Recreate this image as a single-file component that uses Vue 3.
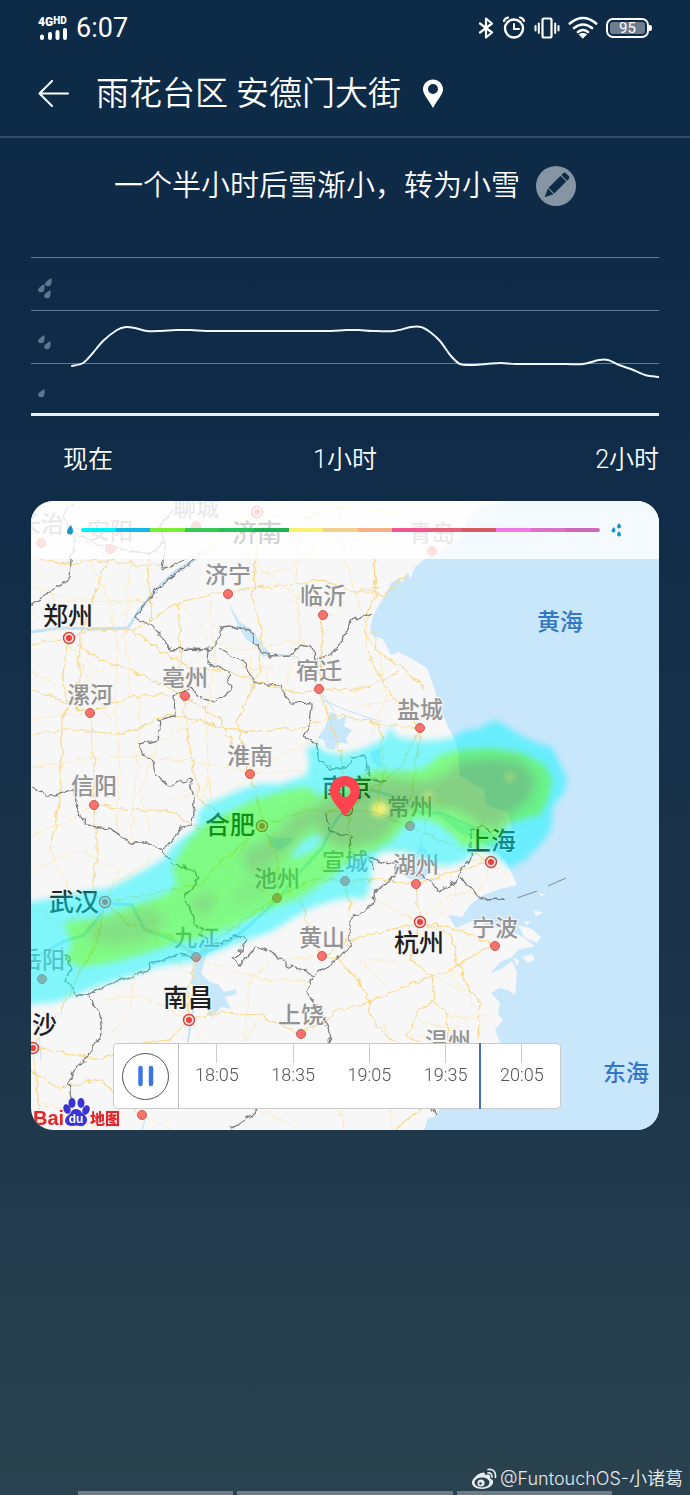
<template>
  <div class="page">
    <!-- 状态栏 -->
    <div class="status-bar">
      <div class="status-left">
        <div class="signal">
          <span class="network">4G<sup>HD</sup></span>
          <svg width="30" height="12" viewBox="0 0 30 12">
            <path d="M4 8.500v1.500M12 6v4M19.500 4v6M27 2v8" stroke="#fff" stroke-width="4" stroke-linecap="round" />
          </svg>
        </div>
        <span class="clock">6:07</span>
      </div>
      <div class="status-right">
        <svg width="16" height="24" viewBox="0 0 16 24">
          <path d="M2 7.500l12 9-6 5V2.500l6 5-12 9" fill="none" stroke="#fff" stroke-width="2.200" stroke-linejoin="round" stroke-linecap="round" />
        </svg>
        <svg width="24" height="24" viewBox="0 0 24 24" fill="none" stroke="#fff" stroke-linecap="round">
          <circle cx="12" cy="12.500" r="9" stroke-width="2.400" />
          <path d="M12 8v5h5" stroke-width="2" />
          <path d="M2 5q1-3 4-3.500M22 5q-1-3-4-3.500" stroke-width="2.200" />
        </svg>
        <svg width="26" height="24" viewBox="0 0 26 24" fill="none" stroke="#fff" stroke-linecap="round">
          <rect x="8.500" y="2.500" width="9" height="19" rx="1.500" stroke-width="2.200" />
          <path d="M4.800 7.500v9.500M21.200 7.500v9.500M1.500 10v4.500M24.500 10v4.500" stroke-width="2" />
        </svg>
        <svg width="30" height="24" viewBox="0 0 30 24" fill="none" stroke="#fff" stroke-width="2.600" stroke-linecap="round">
          <path d="M1.800 7.500q13.200-11 26.400 0M6 12q9-7 18 0M10 16q5-4 10 0" />
          <path d="M11.500 18.300q3.500-2 7 0L15 22z" fill="#fff" stroke-width="1" />
        </svg>
        <div class="battery"><span class="battery-level">95</span></div>
      </div>
    </div>

    <!-- 标题 -->
    <header class="header">
      <button class="icon-btn back" type="button" aria-label="返回">
        <svg width="32" height="28" viewBox="0 0 32 28" fill="none" stroke="#fff" stroke-width="2" stroke-linecap="round" stroke-linejoin="round">
          <path d="M14 1L1.500 13.500 14 26M1.500 13.500H30" />
        </svg>
      </button>
      <h1 class="title">雨花台区 安德门大街</h1>
      <svg class="location" width="20" height="30" viewBox="0 0 20 30">
        <path d="M10 .5C4.500.5 0 4.800 0 10.200 0 15.500 5.500 20.500 10 29c4.500-8.500 10-13.500 10-18.800C20 4.800 15.500.5 10 .5zm0 4.500a5 5 0 1 1 0 10 5 5 0 0 1 0-10z" fill="#fff" />
      </svg>
    </header>

    <div class="forecast">
      <p class="forecast-text">一个半小时后雪渐小，转为小雪</p>
      <button class="icon-btn edit" type="button" aria-label="编辑">
        <svg width="40" height="40" viewBox="0 0 40 40">
          <circle cx="20" cy="20" r="20" fill="#8695a4" />
          <g transform="rotate(45 20 20)" fill="#0e2b48">
            <path d="M16 6q0-2 2-2h4q2 0 2 2v2.500h-8zM16 9.500h8v17h-8zM16 27.500h8L20 36z" />
          </g>
        </svg>
      </button>
    </div>

    <!-- 降水曲线 -->
    <section class="chart">
      <svg class="chart-svg" viewBox="0 0 628 160">
        <path d="M0 .5H628M0 53.500H628M0 106.500H628" stroke="#617a92" stroke-width="1" />
        <path d="M0 157.500H628" stroke="#e9f0fa" stroke-width="3" />
        <path v-for="(d, i) in chartDrops" :key="i" :transform="`translate(${d[0]} ${d[1]})`" d="M6.500 0Q7 4 6 6.500A3.200 3.200 0 0 1 0 6Q0 3.500 6.500 0z" fill="#5f778d" />
        <path :d="curve" fill="none" stroke="#f2f7ff" stroke-width="2" stroke-linecap="round" />
      </svg>
      <div class="axis">
        <span class="axis-now">现在</span>
        <span>1小时</span>
        <span class="axis-end">2小时</span>
      </div>
    </section>

    <!-- 雷达地图 -->
    <section class="map">
      <svg class="map-svg" viewBox="31 501 628 629">
        <defs>
          <filter id="soft" x="-10%" y="-10%" width="120%" height="120%" color-interpolation-filters="sRGB"><feGaussianBlur stdDeviation="3" /></filter>
          <filter id="softer" x="-30%" y="-30%" width="160%" height="160%" color-interpolation-filters="sRGB"><feGaussianBlur stdDeviation="6" /></filter>
          <filter id="rough" x="-5%" y="-5%" width="110%" height="110%" color-interpolation-filters="sRGB">
            <feTurbulence type="fractalNoise" baseFrequency="0.12" numOctaves="2" seed="4" />
            <feDisplacementMap in="SourceGraphic" scale="8" xChannelSelector="R" yChannelSelector="G" />
          </filter>
        </defs>
        <rect x="31" y="501" width="628" height="629" fill="#f7f7f7" />

        <g fill="#c9e7fb">
          <path d="M505 501L480 508 467 520 462 533 450 545 440 552 426 558 415 567 410 580 408 572 402 582 398 579 391 583 387 592 380 603 373 616 370 628 372 636 383 639 391 655 398 652 412 659 427 668 433 685 441 710 448 727 455 740 458 752 460 776 484 790 487 806 508 812 512 828 500 836 480 830 460 824 442 812 434 809 446 822 462 834 482 842 495 850 505 861 512 874 517 885 500 889 483 895 470 905 462 917 448 915 456 928 475 920 488 926 510 930 524 938 535 946 518 950 512 957 500 962 490 974 503 968 512 961 517 972 515 995 508 990 500 988 491 993 500 1003 498 1014 503 1020 495 1030 500 1042 496 1050 499 1065 480 1095 440 1108 434 1117 428 1118 424 1130H659V501z" />
          <path d="M228 602L234 612 240 622 252 630 262 644 270 653 263 658 259 648 247 640 238 626z" />
          <path d="M330 712l6 2 2 6 8-4-2 10 8 4-6 8 2 6-10-2-4 8-8-2-2-8-7-2 8-10z" />
          <path d="M195 965l8-22 6 3-4 14-4 14 9 8 8 2 6 8 12-3 1 5-12 3 6 12-10-2-8 10-6-2 4-16-8-10-12-5z" />
          <path d="M401 862l12-3 8-14 6 6 2 20-6 9-14-1-12-8z" />
          <path d="M266 834l12 4 16 0-8 9-8 4-8-8z" />
          <path d="M370 752l10-4 1 20-8-6z" />
        </g>
        <g fill="none" stroke="#c3e2f6" stroke-width="3" stroke-linejoin="round">
          <path d="M31 632L60 628 92 629 128 628 138 612 155 590 176 571 197 558 202 549" />
          <path d="M31 960L48 950 62 942 84 935 98 918 106 903 132 905 145 930 168 938 198 955 226 944 250 925 277 900 300 872 322 848 335 822 346 808 372 790 398 798 418 812 444 814 475 828" />
          <path d="M188 1042L191 1020 198 985" stroke-width="2" />
          <path d="M31 1020l8 10 2 30M142 1130l4-14" stroke-width="1" />
          <path d="M270 653l28 4 24 36 12 18M322 700l24 10 35 12" stroke-width="1" />
        </g>
        <g fill="#f7f7f7">
          <path d="M518 925l14 4 9 8-4 6-12-5zM522 957l10-3 3 5-7 4zM533 910l10 3-7 3zM540 893l6 2-6 1zM513 958l6 2-2 6zM524 921l7 1-5 3zM476 840l14 8 5 5-8-2z" />
        </g>

        <!-- 道路 -->
        <g fill="none" stroke-linejoin="round" filter="url(#rough)">
          <path v-for="(d, i) in minorRoads" :key="'n' + i" :d="d" stroke="#fbebc3" />
          <path v-for="(d, i) in majorRoads" :key="'m' + i" :d="d" stroke="#f6d988" stroke-width="1.200" />
        </g>

        <!-- 省界 -->
        <g filter="url(#rough)" fill="none" stroke="#7c7c7c" stroke-width="1.300">
          <path v-for="(d, i) in borders" :key="i" :d="d" />
        </g>
        <path d="M517 898L537 891M548 886L566 878" stroke="#7f8b93" stroke-width="1" />

        <!-- 城市 -->
        <g v-for="(c, i) in cities" :key="i">
          <template v-if="c.capital">
            <circle :cx="c.dot[0]" :cy="c.dot[1]" r="5.500" fill="#fbdedb" stroke="#cf4040" stroke-width="1.400" />
            <circle :cx="c.dot[0]" :cy="c.dot[1]" r="3" fill="#ec4038" />
          </template>
          <circle v-else :cx="c.dot[0]" :cy="c.dot[1]" r="4.500" fill="#fb716b" stroke="#c65a57" />
          <text :class="['city', { capital: c.capital }]" :x="c.label[0]" :y="c.label[1] + 9">{{ c.name }}</text>
        </g>
        <text class="sea" x="560" y="630">黄海</text>
        <text class="sea" x="626" y="1081">东海</text>

        <!-- 雷达回波 -->
        <g opacity="0.5">
          <path filter="url(#soft)" fill="#08f4ff" d="M20 904L60 897 95 890 110 888 130 878 150 867 165 858 172 846 185 836 197 828 198 812 208 803 222 798 240 790 258 784 280 784 292 780 306 776 310 762 306 750 315 744 325 752 340 755 360 750 372 745 385 738 390 726 396 737 420 741 440 740 455 737 462 731 480 728 495 720 510 728 520 735 535 742 552 747 558 760 567 778 564 793 553 806 551 830 540 845 525 860 510 868 498 858 480 848 462 862 442 866 420 855 400 851 380 852 372 862 370 885 366 898 350 898 335 900 310 908 290 920 270 932 240 942 215 952 190 962 160 966 130 976 100 985 80 993 55 1002 20 1005z" />
          <path filter="url(#soft)" fill="#08ff14" d="M64 922L100 918 125 908 145 902 165 895 177 885 172 868 182 850 190 838 207 823 233 810 253 800 287 790 307 787 320 797 340 788 360 778 375 770 400 772 425 768 440 755 460 750 490 748 520 752 545 765 552 780 548 800 540 815 520 820 505 824 498 840 482 848 462 846 450 832 432 820 415 818 402 828 390 842 370 852 350 858 340 870 320 885 300 898 280 905 255 915 230 928 200 938 170 945 140 955 110 963 80 967 65 960 72 945z" />
          <path filter="url(#soft)" fill="#08f4ff" d="M290 856l10-14 20-10 6 4-10 12-18 10z" />
          <g filter="url(#softer)" fill="#14a010">
            <path d="M322 800L345 792 365 780 395 778 425 782 450 772 458 762 490 758 522 762 536 780 530 800 512 812 500 828 480 826 462 812 440 808 415 806 398 820 384 838 362 846 340 848 322 838 314 815z" opacity="0.9" />
            <path d="M240 852l30-14 24-24 14-2 2 12-14 18-20 20-28 14z" opacity="0.7" />
            <path d="M290 822l20-18 14 4-4 14-14 10z" opacity="0.6" />
            <path d="M188 900l20-10 10 14-18 14z" opacity="0.6" />
            <path d="M85 925l40-10 26-8 16 10-16 22-40 8-20-6z" opacity="0.55" />
            <path d="M230 890l40-20 20 4-24 22-30 12z" opacity="0.3" />
          </g>
          <g filter="url(#soft)" fill="#f4f000">
            <ellipse cx="380" cy="809" rx="9" ry="7" />
            <ellipse cx="428" cy="796" rx="5" ry="4" opacity="0.6" />
            <ellipse cx="510" cy="777" rx="5" ry="4" opacity="0.5" />
          </g>
        </g>

        <!-- 当前位置 -->
        <path d="M345 776c-8.500 0-15 6.600-15 15 0 10 8 15 13.500 23.500q1.500 2 3 0C352 806 360 801 360 791c0-8.400-6.500-15-15-15zm0 10a5.500 5.500 0 1 1 0 11 5.500 5.500 0 0 1 0-11z" fill="#ff4450" />

        <!-- 百度地图标志 -->
        <g>
          <text class="logo-text" x="33" y="1125">Bai</text>
          <g fill="#3b33d3">
            <ellipse cx="67" cy="1109" rx="3.500" ry="5" transform="rotate(-20 67 1109)" />
            <ellipse cx="72" cy="1103" rx="3.500" ry="5" />
            <ellipse cx="81" cy="1103" rx="3.500" ry="5" />
            <ellipse cx="86" cy="1110" rx="3.500" ry="5" transform="rotate(25 86 1110)" />
            <path d="M76 1109q4 0 6 4 6 4 5 8-2 6-7 5-4-1-8 0-6 0-7-5 0-4 5-7 2-5 6-5z" />
          </g>
          <text class="logo-du" x="76" y="1123">du</text>
          <text class="logo-map" x="90" y="1124">地图</text>
        </g>
      </svg>

      <div class="legend">
        <svg width="8" height="10" viewBox="0 0 8 10"><path d="M5 0Q7 4 7 6.500A3 3 0 0 1 1 6.500Q1 4 5 0z" fill="#1c94d0" /></svg>
        <div class="legend-bar">
          <span v-for="color in levels" :key="color" :style="{ background: color }"></span>
        </div>
        <svg width="12" height="14" viewBox="0 0 12 14" fill="#1c94d0">
          <path d="M3 4q1.500 2 1.500 3.500a2 2 0 0 1-4 0Q.5 6 3 4zM8 0q2 2 2 3.500a2 2 0 0 1-4 0Q6 2 8 0zM8 8q2 2 2 3.500a2 2 0 0 1-4 0Q6 10 8 8z" />
        </svg>
      </div>

      <div class="player">
        <div class="player-control">
          <button class="play-btn" type="button" :aria-label="playing ? '暂停' : '播放'" @click="playing = !playing">
            <svg width="18" height="22" viewBox="0 0 18 22">
              <path v-if="playing" d="M3.500 3v16M14 3v16" stroke="#3e74e8" stroke-width="4.500" stroke-linecap="round" />
              <path v-else d="M4 2l12 9-12 9z" fill="#3e74e8" />
            </svg>
          </button>
        </div>
        <div class="timeline">
          <span v-for="t in times" :key="t" class="time">{{ t }}</span>
          <i class="cursor" :style="{ left: progress + '%' }"></i>
        </div>
      </div>
    </section>

    <footer class="footer">
      <div class="author">
        <svg width="26" height="22" viewBox="0 0 26 22">
          <path d="M10 5Q4 7 1 13.500C0 18 5 21 11 21c7 0 12-4 11-8-.5-2-3-2-3-3 1-3-1-4.500-5-3 0-3-1-3-4-2z" fill="#e8edf0" />
          <ellipse cx="11" cy="14.500" rx="7.500" ry="5" fill="#2a404d" />
          <circle cx="10" cy="15" r="3.600" fill="#e8edf0" />
          <circle cx="9.500" cy="15.500" r="1.300" fill="#2a404d" />
          <path d="M17 5q4-.5 4 4M17 1.500q8-1 7.500 8" fill="none" stroke="#e8edf0" stroke-width="1.700" stroke-linecap="round" />
        </svg>
        <span>@FuntouchOS-小诸葛</span>
      </div>
      <div class="nav-hints">
        <i class="hint"></i>
        <i class="hint wide"></i>
        <i class="hint"></i>
      </div>
    </footer>
  </div>
</template>

<script setup>
import { ref, computed } from 'vue';

const playing = ref(true);
const progress = ref(79);

const times = ['18:05', '18:35', '19:05', '19:35', '20:05'];

const levels = [
  '#00f0f6', '#12b9e6', '#77ef35', '#36c855', '#25c25b', '#1cb054', '#f9f070', '#f0d08c',
  '#f6b184', '#ef5791', '#e26378', '#d75a66', '#f078e8', '#da70ca', '#cb68b8'
];

// 雨滴图标位置
const chartDrops = [
  [14, 21], [7, 27], [13, 33],
  [7, 78], [13, 84],
  [7, 132]
];

// 降水强度
const rain = [
  [41, 109], [52, 106], [61, 97], [72, 84], [86, 73], [95, 70], [104, 71], [116, 74], [130, 74],
  [145, 73], [160, 73], [175, 74], [195, 74], [220, 74], [250, 74], [280, 74], [300, 74],
  [315, 73], [328, 73], [342, 74], [363, 74], [380, 70], [390, 70],
  [399, 75], [409, 84], [420, 99], [429, 107], [440, 108], [455, 107], [470, 106], [485, 107],
  [510, 107], [535, 107], [552, 107], [568, 103], [577, 103], [588, 108], [600, 112], [614, 118], [628, 120]
];

const curve = computed(() => {
  let d = `M${rain[0][0]} ${rain[0][1]}`;
  for (let i = 0; i < rain.length - 1; i++) {
    const [x1, y1] = rain[i];
    const [x2, y2] = rain[i + 1];
    const [x0, y0] = rain[i - 1] || rain[i];
    const [x3, y3] = rain[i + 2] || rain[i + 1];
    d += `C${x1 + (x2 - x0) / 6} ${y1 + (y2 - y0) / 6} ${x2 - (x3 - x1) / 6} ${y2 - (y3 - y1) / 6} ${x2} ${y2}`;
  }
  return d;
});

const cities = [
  { name: '长治', label: [41, 523], dot: [41, 543] },
  { name: '安阳', label: [110, 530], dot: [110, 549] },
  { name: '聊城', label: [196, 507], dot: [196, 526] },
  { name: '济南', label: [257, 533], dot: [257, 512], capital: true },
  { name: '青岛', label: [432, 532], dot: [432, 551] },
  { name: '济宁', label: [228, 574], dot: [228, 594] },
  { name: '临沂', label: [323, 595], dot: [323, 615] },
  { name: '郑州', label: [68, 616], dot: [69, 638], capital: true },
  { name: '亳州', label: [185, 677], dot: [185, 696] },
  { name: '漯河', label: [90, 694], dot: [90, 713] },
  { name: '宿迁', label: [319, 670], dot: [319, 689] },
  { name: '盐城', label: [420, 709], dot: [420, 728] },
  { name: '淮南', label: [250, 755], dot: [250, 774] },
  { name: '信阳', label: [94, 785], dot: [94, 805] },
  { name: '合肥', label: [230, 825], dot: [262, 826], capital: true },
  { name: '南京', label: [347, 788], dot: [347, 810], capital: true },
  { name: '常州', label: [410, 806], dot: [410, 826] },
  { name: '池州', label: [277, 878], dot: [277, 898] },
  { name: '宣城', label: [345, 861], dot: [345, 881] },
  { name: '湖州', label: [416, 864], dot: [416, 884] },
  { name: '上海', label: [491, 841], dot: [491, 862], capital: true },
  { name: '武汉', label: [74, 902], dot: [105, 902], capital: true },
  { name: '九江', label: [197, 937], dot: [196, 957] },
  { name: '黄山', label: [322, 937], dot: [322, 956] },
  { name: '岳阳', label: [42, 959], dot: [42, 979] },
  { name: '南昌', label: [188, 998], dot: [189, 1020], capital: true },
  { name: '杭州', label: [419, 943], dot: [420, 922], capital: true },
  { name: '宁波', label: [495, 927], dot: [495, 946] },
  { name: '上饶', label: [301, 1014], dot: [301, 1034] },
  { name: '长沙', label: [32, 1025], dot: [33, 1048], capital: true },
  { name: '温州', label: [448, 1040], dot: [448, 1062] },
  { name: '吉安', label: [142, 1095], dot: [142, 1115] }
];

const borders = [
  'M75 501L62 515 72 530 76 545 70 560 69 580 50 592 31 605',
  'M76 533L98 545 130 551 150 553 165 543 160 525 178 505',
  'M165 543L162 569 182 561',
  'M195 560L178 572 160 587 146 602 135 618 148 622 162 636 170 650 190 649 208 650 218 640 220 628 238 626 250 630 258 648 268 656 290 655 300 644 312 646 315 660 330 655 343 640 350 622 372 613',
  'M208 650L207 662 228 672 230 690 215 702 200 698 192 688 174 696 175 716 160 720 158 740 138 745 142 753 153 762 155 776 170 786 190 780',
  'M218 648L242 662 250 675 258 684 280 686 290 702 312 704 310 725 303 736 316 744 320 760 332 768 346 768 352 757 365 755 368 775',
  'M31 788L55 796 75 788 76 805 85 826 110 828 130 843 150 843 162 850 170 842 182 828 192 825 194 800 190 780',
  'M162 850L175 865 195 870 198 880 186 896 192 915 200 930 210 945 228 940 235 934 246 940 242 950 232 958 240 966 256 946 272 952 290 966 314 975 330 965 350 945 350 920 372 905 375 900 374 892 392 880 395 865 385 862 370 858',
  'M368 778L385 782M326 812L328 830 350 838 352 855 368 858 374 870',
  'M395 865L430 880 438 892 458 880 462 868 470 858 472 830 485 826 492 832',
  'M462 877L468 887 480 895 485 900 503 899',
  'M314 975L306 992 318 1005 325 1020 330 1043',
  'M198 960L180 955 160 960 150 966 138 975 110 983 88 995 76 995 66 980 72 970 66 955 60 950',
  'M88 995L100 1015 102 1035 90 1055 75 1070 68 1085 72 1100',
  'M258 1110L245 1120 230 1128',
  'M432 1108l4 8'
];

const majorRoads = [
  'M31 556L60 565 100 560 140 565 168 566 210 550 240 520 257 512 300 520 340 508 400 512',
  'M31 644L69 638 92 630 132 631 152 620 178 602 228 592 262 586 300 584 323 580 355 592 378 592',
  'M69 638L62 670 66 700 90 713 94 760 94 805 98 850 92 890 105 902 98 940 60 1010 33 1048 40 1130',
  'M110 549L100 580 88 610 80 636 80 680 62 720 60 800 50 850',
  'M257 512L256 560 252 600 262 630 260 670 238 720 244 760 250 774 260 810 262 826 278 860 277 898',
  'M132 631L160 650 190 668 230 672 270 686 300 694 319 689 360 690 400 672',
  'M152 622L148 570 150 530',
  'M178 602L180 640 183 696 188 740 200 800 240 826 262 826 300 812 347 810 376 812 410 826 450 845 491 862',
  'M69 638L100 660 130 670 185 696 220 720 250 774',
  'M31 735L70 728 120 735 170 714 240 732 300 728 340 715 380 725 420 728',
  'M31 690L60 700 90 713 120 700 150 694 183 696',
  'M94 805L130 810 165 810 200 828 230 836',
  'M105 902L140 895 170 890 200 885 220 862 262 826',
  'M105 902L130 925 170 935 196 957 230 930 277 898 310 880 345 881 380 880 416 884 450 872 491 862',
  'M196 957L188 990 189 1020 170 1040 130 1045 100 1060 60 1052 33 1048',
  'M189 1020L220 1012 260 1015 301 1034 340 1010 368 1002 410 985 450 970 480 950 495 946',
  'M31 1072L60 1088 100 1080 142 1115',
  'M322 956L350 940 390 930 420 922 460 930 495 946',
  'M420 922L410 960 432 975 434 1000 418 1012 407 1035 420 1043',
  'M434 1000L445 1014 448 1040 M468 1065L420 1110 395 1130',
  'M322 956L310 930 300 900M322 956L340 960 365 990 368 1002 372 1020 395 1043',
  'M416 884L418 905 420 922 450 935 458 965 470 990 480 1000 478 1040',
  'M347 810L350 840 345 881 350 910',
  'M347 810L370 790 400 770 420 728 395 700 370 660 365 636 378 632',
  'M323 615L322 650 319 689 340 750 347 810',
  'M374 560L375 590 383 596 405 575',
  'M365 636L368 610 378 592M360 590L380 588',
  'M378 636L375 650 400 665 425 690',
  'M410 826L412 790 420 728M380 725L384 770 376 812'
];

const minorRoads = [
  'M31 585L70 600 110 602 150 600M90 560L110 600 118 650 115 700 120 770 116 830',
  'M31 612L60 640 110 680M31 672L64 690 100 688M50 590L68 638 110 720',
  'M130 560L125 640 130 700M210 600L215 660 206 720 210 800',
  'M179 600L210 640 240 650 300 640 330 660',
  'M225 500L250 560 300 600 345 620M300 500L296 560 300 640 285 690',
  'M235 575L290 570 320 540 400 540 430 551M340 508L345 560 365 620',
  'M31 768L90 758 150 756 210 764 250 774 300 770M140 700L138 760 130 843',
  'M31 835L70 820 94 805M31 870L80 850 120 870 105 902M50 850L70 890',
  'M31 905L60 925 105 902 120 880 150 860M105 902L88 960 60 1000',
  'M150 910L160 950 200 980 215 1020M135 970L130 1010 110 1035',
  'M100 1000L140 995 189 1020M189 1020L205 1043M260 1015L245 1042 250 980 270 960 322 956',
  'M196 957L230 970 270 980 310 982M142 1115L170 1128M31 1100L80 1115 100 1130',
  'M220 862L240 880 277 898M262 826L240 850 215 900M262 826L300 850 345 881',
  'M205 830L222 800 250 774 290 750 320 740M300 812L320 780 347 810',
  'M360 820L390 800 440 800 480 810M440 800L450 845M360 850L410 850 450 872',
  'M430 800L420 850 416 884M470 820L460 850 491 862 500 840M491 862L480 890 450 895 420 922',
  'M470 860L491 862 510 880M480 850L498 872M450 872L455 895 440 915M485 815L475 850',
  'M345 881L385 905 420 922M350 910L345 960M385 985L360 960 395 960M432 975L460 990',
  'M450 970L478 1010 452 1030 420 1020M395 1043L380 1020M445 1014L475 1020 490 1010',
  'M407 1035L448 1040M365 636L380 650 385 700 370 740M395 700L365 705 350 690',
  'M240 667L275 668M250 655L252 690M262 660L270 686M335 500L360 530M31 720L62 715 90 713',
  'M200 720L160 740 140 790 150 830M210 764L204 800M170 800L200 790M260 1110L300 1130M340 1110L345 1130M390 1110L392 1130'
];
</script>

<style scoped>
.page {
  display: flex;
  flex-direction: column;
  min-height: 100vh;
  color: #fff;
  font-family: Roboto, "Noto Sans CJK SC", sans-serif;
  font-weight: 350;
  background: linear-gradient(#0d2a47 0%, #0f2b48 28%, #1c344a 65%, #2a424e 100%);
}

.status-bar {
  display: flex;
  align-items: center;
  justify-content: space-between;
  height: 52px;
  padding: 4px 41px 0 38px;
  box-sizing: border-box;
}

.status-left,
.status-right {
  display: flex;
  align-items: center;
  gap: 8px;
}

.signal {
  display: flex;
  flex-direction: column;
  width: 30px;
}

.network {
  font-size: 12px;
  line-height: 12px;
  font-weight: 900;
  white-space: nowrap;
}

.network sup {
  font-size: 10px;
  line-height: 8px;
  vertical-align: 2px;
}

.clock {
  font-size: 27px;
  font-weight: 400;
  line-height: 30px;
}

.battery {
  position: relative;
  width: 43px;
  height: 20px;
  padding: 2px;
  box-sizing: border-box;
  border: 2px solid #fff;
  border-radius: 7px;
}

.battery::after {
  content: "";
  position: absolute;
  top: 5px;
  right: -5px;
  width: 3px;
  height: 6px;
  border-radius: 0 2px 2px 0;
  background: #fff;
}

.battery-level {
  display: block;
  height: 12px;
  border-radius: 3px;
  background: #6d7c8f;
  font-size: 15px;
  font-weight: 400;
  line-height: 13px;
  text-align: center;
}

.header {
  display: flex;
  align-items: center;
  height: 84px;
  padding: 0 38px;
  border-bottom: 2px solid #32496a;
}

.icon-btn {
  display: flex;
  padding: 0;
  border: 0;
  background: none;
  cursor: pointer;
}

.title {
  margin: 0 22px 0 26px;
  font-size: 33px;
  font-weight: 350;
  line-height: 40px;
}

.forecast {
  display: flex;
  align-items: center;
  justify-content: center;
  gap: 16px;
  margin-top: 28px;
}

.forecast-text {
  margin: 0;
  font-size: 29px;
  line-height: 40px;
}

.chart {
  margin: 51px 31px 0;
}

.chart-svg {
  display: block;
  width: 100%;
}

.axis {
  display: grid;
  grid-template-columns: 1fr auto 1fr;
  margin-top: 28px;
  font-size: 25px;
  line-height: 30px;
}

.axis-now {
  padding-left: 32px;
}

.axis-end {
  text-align: right;
}

.map {
  position: relative;
  margin: 26px 31px 0;
  border-radius: 22px;
  overflow: hidden;
}

.map-svg {
  display: block;
  width: 100%;
}

.city,
.sea {
  font-family: "Noto Sans CJK SC", sans-serif;
  font-size: 23px;
  font-weight: 500;
  text-anchor: middle;
  fill: #939393;
  stroke: #f7f7f7;
  stroke-width: 2px;
  paint-order: stroke;
}

.city.capital {
  font-size: 25px;
  fill: #1f1f1f;
}

.sea {
  fill: #3576c4;
  stroke: none;
}

.logo-text {
  font-family: "Liberation Sans", sans-serif;
  font-size: 20px;
  font-weight: 700;
  fill: #e3262c;
}

.logo-du {
  font-family: "Liberation Sans", sans-serif;
  font-size: 12px;
  font-weight: 700;
  text-anchor: middle;
  fill: #fff;
}

.logo-map {
  font-family: "Noto Sans CJK SC", sans-serif;
  font-size: 15px;
  font-weight: 900;
  fill: #e3262c;
}

.legend {
  position: absolute;
  top: 0;
  left: 0;
  right: 0;
  display: flex;
  align-items: center;
  height: 58px;
  padding: 0 36px 0 35px;
  box-sizing: border-box;
  background: rgba(255, 255, 255, 0.8);
}

.legend-bar {
  display: flex;
  flex: 1;
  height: 4px;
  margin: 0 11px 0 7px;
  border-radius: 2px;
  overflow: hidden;
}

.legend-bar span {
  flex: 1;
}

.player {
  position: absolute;
  left: 13%;
  right: 15.600%;
  bottom: 21px;
  display: flex;
  height: 66px;
  box-sizing: border-box;
  border: 1px solid #c9c9c9;
  border-radius: 4px;
  background: #fff;
}

.player-control {
  display: flex;
  align-items: center;
  justify-content: center;
  width: 64px;
  border-right: 1px solid #bbb;
}

.play-btn {
  display: flex;
  align-items: center;
  justify-content: center;
  width: 47px;
  height: 47px;
  padding: 0;
  border: 1px solid #555;
  border-radius: 50%;
  background: #fff;
  cursor: pointer;
}

.timeline {
  position: relative;
  display: grid;
  flex: 1;
  grid-template-columns: repeat(5, 1fr);
}

.time {
  color: #555;
  font-size: 18px;
  line-height: 24px;
  text-align: center;
}

.time::before {
  content: "";
  display: block;
  width: 1px;
  height: 19px;
  margin: 0 auto;
  background: #ccc;
}

.cursor {
  position: absolute;
  top: -1px;
  bottom: -1px;
  width: 2px;
  margin-left: -1px;
  background: #3e6fd0;
}

.footer {
  margin-top: auto;
}

.author {
  display: flex;
  align-items: center;
  justify-content: flex-end;
  gap: 3px;
  padding-right: 7px;
  color: #e4eaee;
  font-family: Inter, "Noto Sans CJK SC", sans-serif;
  font-size: 18px;
  line-height: 24px;
}

.nav-hints {
  display: flex;
  gap: 4px;
  padding: 0 78px;
}

.hint {
  flex: 155;
  height: 4px;
  background: #6b7c86;
}

.hint.wide {
  flex: 216;
}
</style>

<style>
body {
  margin: 0;
}
</style>
